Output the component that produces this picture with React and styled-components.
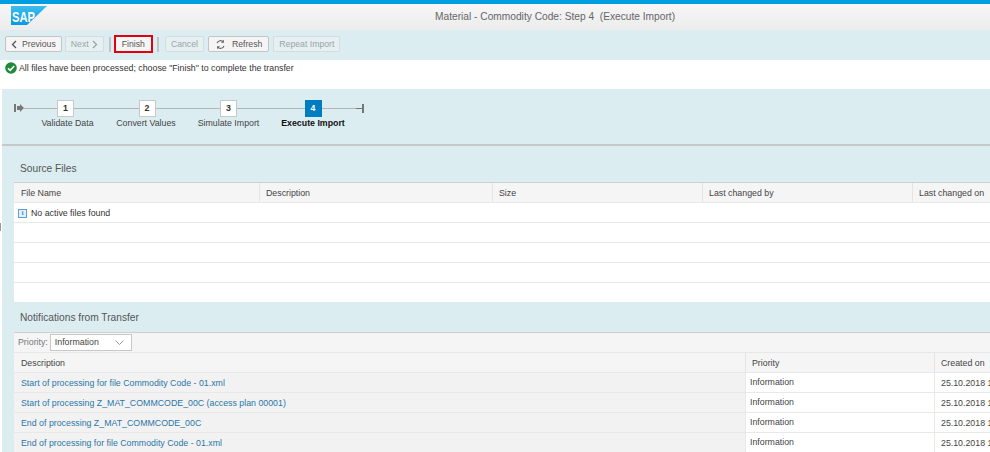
import React from 'react';
import styled, { createGlobalStyle } from 'styled-components';

const Global = createGlobalStyle`
  html, body { margin: 0; padding: 0; background: #fff; overflow: hidden; }
  body { font: 400 8.8px/1.2 "Liberation Sans", Arial, sans-serif; color: #333; }
`;

const Page = styled.div`
  width: 990px;
  height: 452px;
  overflow: hidden;
  position: relative;
  border-top: 4px solid #009de0;
  box-sizing: border-box;
`;

const Sash = styled.div`
  position: absolute;
  left: 0;
  top: 219px;
  width: 1px;
  height: 8px;
  background: #999;
`;

const Header = styled.header`
  height: 26px;
  display: flex;
  align-items: center;
  position: relative;
  background: linear-gradient(#f6f6f6, #ececec);
`;

const Logo = styled.svg`
  width: 38px;
  height: 20px;
  margin: -3px 0 0 10px;
`;

const Title = styled.div`
  position: absolute;
  left: 435px;
  top: 7px;
  font-size: 10.2px;
  color: #666;
  white-space: pre;
`;

const Toolbar = styled.div`
  height: 30px;
  padding: 0 0 2px 5px;
  display: flex;
  align-items: center;
  box-sizing: border-box;
  background: #dcedf1;
`;

const Button = styled.div`
  height: 16px;
  box-sizing: border-box;
  padding: 0 ${p => p.$pad || 5}px;
  margin-right: ${p => p.$gap ?? 3}px;
  display: flex;
  align-items: center;
  gap: ${p => p.$iconGap || 5}px;
  border: 1px solid ${p => (p.$off ? '#d4dcde' : '#c4c4c4')};
  border-radius: 2px;
  background: ${p => (p.$off ? '#e6eff1' : '#f5f5f5')};
  color: ${p => (p.$off ? '#9aa5a8' : '#555')};
  font-size: 8.7px;
  white-space: nowrap;
`;

const FinishButton = styled(Button)`
  height: 18px;
  padding: 0 6px;
  border: 2px solid #e0000f;
  border-radius: 0;
  background: #f5f5f5;
  margin-right: 0;
`;

const Sep = styled.div`
  width: 2px;
  height: 15px;
  background: #bfc7c9;
  margin: 0 ${p => p.$right ?? 5}px 0 ${p => p.$left ?? 5}px;
`;

const Message = styled.div`
  height: 29px;
  padding: 2px 0 0 5px;
  box-sizing: border-box;
  display: flex;
  align-items: flex-start;
  gap: 2px;
  color: #333;
  line-height: 13px;
`;

const Stepper = styled.div`
  height: 57px;
  margin-left: 2px;
  background: #dcedf1;
  border-bottom: 2px solid #c6c9ca;
  box-sizing: border-box;
  position: relative;
  display: flex;
  align-items: flex-start;
  padding: 11px 0 0 12px;
`;

const Step = styled.div`
  width: ${p => p.$w}px;
  display: flex;
  flex-direction: column;
  align-items: center;
  flex: none;
`;

const StepRow = styled.div`
  width: 100%;
  height: 16px;
  position: relative;
  display: flex;
  justify-content: center;
  &::before {
    content: '';
    position: absolute;
    left: 0;
    right: 0;
    top: 8px;
    height: 1px;
    background: #b4b4b4;
  }
`;

const StepNum = styled.div`
  width: 17px;
  height: 17px;
  box-sizing: border-box;
  position: relative;
  text-align: center;
  font-weight: 700;
  line-height: 15px;
  background: ${p => (p.$active ? '#007cc0' : '#fff')};
  color: ${p => (p.$active ? '#fff' : '#333')};
  border: 1px solid ${p => (p.$active ? '#007cc0' : '#c8c8c8')};
`;

const StepLabel = styled.div`
  margin: 2px 0 0 ${p => p.$shift || 0}px;
  white-space: nowrap;
  color: ${p => (p.$active ? '#111' : '#444')};
  font-weight: ${p => (p.$active ? 700 : 400)};
`;

const Section = styled.section`
  margin-left: 2px;
  background: #dcedf1;
  padding-left: 12px;
`;

const SectionTitle = styled.div`
  height: ${p => p.$h}px;
  display: flex;
  align-items: center;
  padding: ${p => p.$top || 0}px 0 0 6px;
  font-size: 10.2px;
  color: #555;
  box-sizing: border-box;
`;

const Table = styled.div`
  background: #fff;
  border-top: 1px solid #d0d0d0;
`;

const Row = styled.div`
  display: grid;
  grid-template-columns: ${p => p.$cols};
  height: 20px;
  box-sizing: border-box;
  border-bottom: 1px solid #e8e8e8;
  white-space: nowrap;
`;

const HeadCell = styled.div`
  display: flex;
  align-items: center;
  padding: 1px 0 0 ${p => p.$pad || 6}px;
  background: #f5f5f5;
  color: #444;
  overflow: hidden;
  & + & { border-left: 1px solid #e4e4e4; }
`;

const Cell = styled.div`
  display: flex;
  align-items: center;
  overflow: hidden;
  padding: ${p => (p.$raised ? '0 0 1px' : '1px 0 0')} ${p => p.$pad || 6}px;
  padding-right: 0;
  background: ${p => (p.$grey ? '#f2f2f2' : '#fff')};
  color: ${p => (p.$link ? '#2a76a8' : '#444')};
  & + & { border-left: 1px solid #e8e8e8; }
`;

const EmptyRow = styled(Cell)`
  gap: 4px;
  padding: 1px 0 0 4px;
  color: #333;
  grid-column: 1 / -1;
`;

const InfoIcon = styled.span`
  width: 7px;
  height: 7px;
  border: 1px solid #5aa0d8;
  background: #e4f0fa;
  color: #2a70b0;
  font: 700 6px/7px "Liberation Serif", serif;
  text-align: center;
`;

const Spacer = styled.div`
  height: ${p => p.$h}px;
  background: #fff;
`;

const FilterBar = styled.div`
  height: 20px;
  background: #f5f5f5;
  display: flex;
  align-items: center;
  box-sizing: border-box;
  border-bottom: 1px solid #e8e8e8;
  padding-left: 4px;
  color: #777;
`;

const Select = styled.div`
  width: 82px;
  height: 17px;
  margin-left: 2px;
  padding: 0 7px 0 4px;
  box-sizing: border-box;
  background: #fff;
  border: 1px solid #c8c8c8;
  display: flex;
  align-items: center;
  justify-content: space-between;
  color: #444;
`;

const sourceCols = '245px 233px 210px 210px 90px';
const notifCols = '731px 189px 70px';

const sourceHeads = ['File Name', 'Description', 'Size', 'Last changed by', 'Last changed on'];
const steps = [
  { n: 1, label: 'Validate Data', w: 83, shift: 4 },
  { n: 2, label: 'Convert Values', w: 80, shift: -2 },
  { n: 3, label: 'Simulate Import', w: 83 },
  { n: 4, label: 'Execute Import', w: 86, active: true },
];
const notifications = [
  'Start of processing for file Commodity Code - 01.xml',
  'Start of processing Z_MAT_COMMCODE_00C (access plan 00001)',
  'End of processing Z_MAT_COMMCODE_00C',
  'End of processing for file Commodity Code - 01.xml',
];

const Chevron = ({ left, color = '#555' }) => (
  <svg width="6" height="9" viewBox="0 0 6 9">
    <path d={left ? 'M5 1 1.5 4.5 5 8' : 'M1 1l3.5 3.5L1 8'} fill="none" stroke={color} strokeWidth="1.3" />
  </svg>
);

const SapLogo = () => (
  <Logo viewBox="0 0 38 20">
    <defs>
      <linearGradient id="sap" x1="0" y1="0" x2="0" y2="1">
        <stop offset="0" stopColor="#3dbdf0" />
        <stop offset="1" stopColor="#0a9ae0" />
      </linearGradient>
    </defs>
    <path d="M1 0h36L17 19H1z" fill="url(#sap)" />
    <text x="2" y="15.5" fontFamily="Liberation Sans" fontWeight="700" fontSize="15" fill="#fff" textLength="23" lengthAdjust="spacingAndGlyphs">SAP</text>
  </Logo>
);

export default function App() {
  return (
    <Page>
      <Global />
      <Sash />
      <Header>
        <SapLogo />
        <Title>Material - Commodity Code: Step 4  (Execute Import)</Title>
      </Header>
      <Toolbar>
        <Button $gap={3}><Chevron left />Previous</Button>
        <Button $off $gap={0} $iconGap={3}>Next <Chevron color="#9aa5a8" /></Button>
        <Sep $left={5} $right={3} />
        <FinishButton>Finish</FinishButton>
        <Sep $left={4} $right={6} />
        <Button $off $gap={4}>Cancel</Button>
        <Button $pad={6} $gap={4} $iconGap={6}>
          <svg width="11" height="11" viewBox="0 0 11 11">
            <path d="M2 4.2A3.7 3.7 0 0 1 8.4 3M9 6.8A3.7 3.7 0 0 1 2.6 8" fill="none" stroke="#666" strokeWidth="1.1" />
            <path d="M8.9 .8v2.9H6zM2.1 10.2V7.3H5z" fill="#666" />
          </svg>
          Refresh
        </Button>
        <Button $off>Repeat Import</Button>
      </Toolbar>
      <Message>
        <svg width="12" height="12" viewBox="0 0 12 12">
          <circle cx="6" cy="6" r="5.8" fill="#1f8a3b" />
          <path d="M3 6.2l2.2 2.2L9.2 4" fill="none" stroke="#fff" strokeWidth="1.6" />
        </svg>
        All files have been processed; choose "Finish" to complete the transfer
      </Message>
      <Stepper>
        <svg width="10" height="8" viewBox="0 0 10 8" style={{ marginTop: 4 }}>
          <path d="M0 0h2v8H0zM3 2h3V0l4 4-4 4V6H3z" fill="#777" />
        </svg>
        {steps.map(s => (
          <Step key={s.n} $w={s.w}>
            <StepRow>
              <StepNum $active={s.active}>{s.n}</StepNum>
            </StepRow>
            <StepLabel $active={s.active} $shift={s.shift}>{s.label}</StepLabel>
          </Step>
        ))}
        <svg width="8" height="9" viewBox="0 0 8 9" style={{ marginTop: 4 }}>
          <path d="M0 4h6V0h2v9H6V5H0z" fill="#777" />
        </svg>
      </Stepper>
      <Section>
        <SectionTitle $h={36} $top={10}>Source Files</SectionTitle>
        <Table>
          <Row $cols={sourceCols}>
            {sourceHeads.map((h, i) => <HeadCell key={h} $pad={i === 0 ? 7 : 6}>{h}</HeadCell>)}
          </Row>
          <Row $cols={sourceCols}>
            <EmptyRow><InfoIcon>i</InfoIcon>No active files found</EmptyRow>
          </Row>
          <Row $cols={sourceCols} />
          <Row $cols={sourceCols} />
          <Row $cols={sourceCols} />
          <Spacer $h={19} />
        </Table>
        <SectionTitle $h={30} $top={2}>Notifications from Transfer</SectionTitle>
        <Table>
          <FilterBar>
            Priority:
            <Select>
              Information
              <svg width="9" height="5" viewBox="0 0 9 5">
                <path d="M.5.5l4 4 4-4" fill="none" stroke="#999" />
              </svg>
            </Select>
          </FilterBar>
          <Row $cols={notifCols}>
            <HeadCell $pad={7}>Description</HeadCell>
            <HeadCell>Priority</HeadCell>
            <HeadCell>Created on</HeadCell>
          </Row>
          {notifications.map(text => (
            <Row $cols={notifCols} key={text}>
              <Cell $grey $link $pad={7}>{text}</Cell>
              <Cell $pad={4} $raised>Information</Cell>
              <Cell>25.10.2018 1</Cell>
            </Row>
          ))}
        </Table>
      </Section>
    </Page>
  );
}
